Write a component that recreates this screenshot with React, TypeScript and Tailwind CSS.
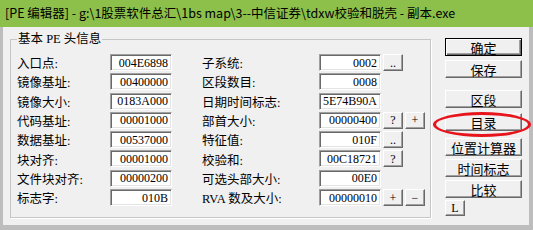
const sim = "font-['Liberation_Serif','Noto_Sans_CJK_SC',serif]";

const left: [string, string][] = [
  ["入口点:", "004E6898"],
  ["镜像基址:", "00400000"],
  ["镜像大小:", "0183A000"],
  ["代码基址:", "00001000"],
  ["数据基址:", "00537000"],
  ["块对齐:", "00001000"],
  ["文件块对齐:", "00000200"],
  ["标志字:", "010B"],
];

const mid: [string, string, string[]][] = [
  ["子系统:", "0002", [".."]],
  ["区段数目:", "0008", []],
  ["日期时间标志:", "5E74B90A", []],
  ["部首大小:", "00000400", ["?", "+"]],
  ["特征值:", "010F", [".."]],
  ["校验和:", "00C18721", ["?"]],
  ["可选头部大小:", "00E0", []],
  ["RVA 数及大小:", "00000010", ["+", "−"]],
];

function Edit({ value }: { value: string }) {
  return (
    <div className="w-[62px] h-[17px] bg-white border border-t-[#a0a0a0] border-l-[#a0a0a0] border-r-white border-b-white shadow-[inset_1px_1px_0_#696969,inset_-1px_-1px_0_#e3e3e3] flex items-center justify-end pr-[3px] text-[12px] leading-none text-black">
      {value}
    </div>
  );
}

function SmallBtn({ label }: { label: string }) {
  return (
    <div className="w-[20px] h-[17px] bg-[#f0f0f0] border border-t-white border-l-white border-r-[#696969] border-b-[#696969] shadow-[inset_-1px_-1px_0_#a0a0a0] flex items-center justify-center text-[12px] leading-none text-black">
      {label}
    </div>
  );
}

function Btn({ label, mt, def }: { label: string; mt: string; def?: boolean }) {
  return (
    <div
      className={`${mt} w-[77px] h-[18px] bg-[#f0f0f0] border ${
        def ? "border-black shadow-[inset_1px_1px_0_white,inset_-1px_-1px_0_#696969,inset_-2px_-2px_0_#a0a0a0]" : "border-t-white border-l-white border-r-[#696969] border-b-[#696969] shadow-[inset_-1px_-1px_0_#a0a0a0]"
      } flex items-center justify-center text-[13px] leading-none text-black`}
    >
      {label}
    </div>
  );
}

export default function App() {
  return (
    <div className="w-[533px] h-[230px] bg-[#f0f0f0] flex flex-col overflow-hidden relative">
      <div className="h-[27px] shrink-0 bg-[#8cc04a] flex items-center px-[5px] text-[12.5px] text-black font-['Noto_Sans_CJK_SC',sans-serif] whitespace-nowrap">
        [PE 编辑器] - g:\1股票软件总汇\1bs map\3--中信证券\tdxw校验和脱壳 - 副本.exe
      </div>
      <div className={`flex-1 flex border-l-[3px] border-r-[4px] border-b-[5px] border-[#bdbdbd] pl-[7px] pt-[5px] ${sim}`}>
        <fieldset className="w-[421px] h-[186px] border border-[#c6c6c6] shadow-[1px_1px_0_white] pl-[6px] pt-[8px]">
          <legend className="px-[1px] text-[12.5px] leading-[14px] text-black">基本 PE 头信息</legend>
          <div className="flex flex-col gap-[2.3px]">
            {left.map(([l, v], i) => {
              const [ml, mv, mb] = mid[i];
              return (
                <div key={l} className="flex items-center h-[17px]">
                  <div className="w-[93px] text-[12.5px] text-black translate-y-[2px] whitespace-nowrap">{l}</div>
                  <Edit value={v} />
                  <div className="w-[117px] ml-[30px] text-[12.5px] text-black translate-y-[2px] whitespace-nowrap">{ml}</div>
                  <Edit value={mv} />
                  <div className="flex gap-[2px] ml-[2px]">
                    {mb.map((b) => (
                      <SmallBtn key={b} label={b} />
                    ))}
                  </div>
                </div>
              );
            })}
          </div>
        </fieldset>
        <div className="ml-[14px] flex flex-col font-['Noto_Sans_CJK_SC',sans-serif]">
          <Btn label="确定" mt="mt-[6px]" def />
          <Btn label="保存" mt="mt-[4px]" />
          <Btn label="区段" mt="mt-[12px]" />
          <Btn label="目录" mt="mt-[5px]" />
          <Btn label="位置计算器" mt="mt-[7px]" />
          <Btn label="时间标志" mt="mt-[3px]" />
          <Btn label="比较" mt="mt-[3px]" />
          <div className={`mt-[2px] w-[20px] h-[16px] bg-[#f0f0f0] border border-t-white border-l-white border-r-[#696969] border-b-[#696969] shadow-[inset_-1px_-1px_0_#a0a0a0] flex items-center justify-center text-[12px] leading-none text-black ${sim}`}>
            L
          </div>
        </div>
      </div>
      <div className="absolute left-[433px] top-[112px] w-[98px] h-[25px] rounded-[50%] border-[3px] border-[#e8141c]" />
    </div>
  );
}
